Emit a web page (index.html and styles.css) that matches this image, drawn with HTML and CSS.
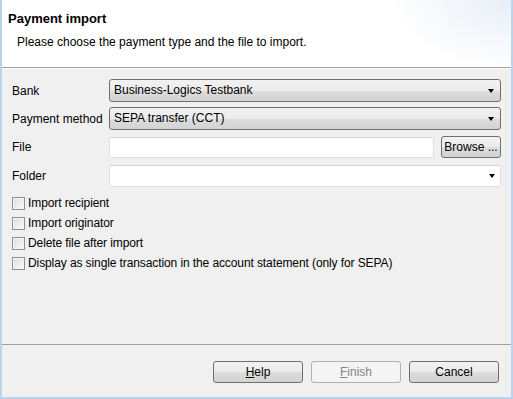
FILE: index.html
```html
<!DOCTYPE html>
<html lang="en">
<head>
  <meta charset="UTF-8">
  <title>Payment import</title>
  <link rel="stylesheet" href="styles.css">
</head>
<body>
  <div class="window">
    <div class="banner">
      <h1>Payment import</h1>
      <p>Please choose the payment type and the file to import.</p>
    </div>

    <div class="content">
      <div class="row">
        <label>Bank</label>
        <div class="combo">Business-Logics Testbank<span class="arrow"></span></div>
      </div>
      <div class="row">
        <label>Payment method</label>
        <div class="combo">SEPA transfer (CCT)<span class="arrow"></span></div>
      </div>
      <div class="row row-file">
        <label>File</label>
        <div class="field"></div>
        <button class="btn btn-browse">Browse ...</button>
      </div>
      <div class="row row-folder">
        <label>Folder</label>
        <div class="field field-combo"><span class="arrow"></span></div>
      </div>

      <div class="checks">
        <div class="check"><span class="box"></span>Import recipient</div>
        <div class="check"><span class="box"></span>Import originator</div>
        <div class="check"><span class="box"></span>Delete file after import</div>
        <div class="check"><span class="box"></span>Display as single transaction in the account statement (only for SEPA)</div>
      </div>
    </div>

    <div class="footer">
      <button class="btn"><u>H</u>elp</button>
      <button class="btn" disabled><u>F</u>inish</button>
      <button class="btn">Cancel</button>
    </div>
  </div>
</body>
</html>
```

FILE: styles.css
```css
body { margin: 0; font-family: "Liberation Sans", Arial, sans-serif; font-size: 12px; color: #000; }

.window {
  width: 513px; height: 399px; box-sizing: border-box;
  border: 2px solid #bcd3ec; border-top: none;
  background: #f0f0f0;
  display: flex; flex-direction: column;
}

.banner {
  height: 68px; box-sizing: border-box; padding: 11px 0 0 6px;
  background: radial-gradient(ellipse 120px 70px at 100% 0, #e8eef8 0%, #f6f8fc 60%, #fff 100%);
  border-bottom: 1px solid #a0a0a0;
  box-shadow: 0 1px 0 #fff;
}
.banner h1 { margin: 0; font-size: 13px; font-weight: bold; line-height: 16px; }
.banner p { margin: 7px 0 0 9px; line-height: 16px; }

.content { flex: 1; padding: 11px 10px 0 10px; }

.row { display: flex; align-items: center; height: 23px; margin-bottom: 5px; }
.row label { width: 97px; flex: none; }
.row-file { height: 22px; margin-top: 6px; margin-bottom: 7px; }
.row-folder { height: 22px; }

.combo {
  flex: 1; height: 23px; box-sizing: border-box; position: relative;
  border: 1px solid #707070; border-radius: 3px;
  background: linear-gradient(#f2f2f2 0%, #ebebeb 50%, #dddddd 51%, #d3d3d3 100%);
  padding-left: 4px; line-height: 21px;
}
.arrow {
  position: absolute; right: 6px; top: 9px;
  border-left: 3.5px solid transparent; border-right: 3.5px solid transparent; border-top: 4px solid #000;
}

.field {
  flex: 1; height: 21px; box-sizing: border-box; position: relative;
  border: 1px solid #dcdfe6; border-top-color: #d0d4da; border-radius: 2px;
  background: #fff;
}
.field-combo { height: 22px; }
.field-combo .arrow { top: 8px; right: 5px; }

.btn {
  font: inherit; color: #000; height: 22px; width: 90px; padding: 0;
  border: 1px solid #707070; border-radius: 3px;
  background: linear-gradient(#f2f2f2 0%, #ebebeb 50%, #dddddd 51%, #d3d3d3 100%);
}
.btn u { text-decoration: underline; }
.btn:disabled { color: #838383; border-color: #adb2b5; background: #f4f4f4; }
.btn-browse { width: 60px; margin-left: 7px; }

.checks { margin-top: 6px; }
.check { display: flex; align-items: center; height: 20px; letter-spacing: -0.1px; }
.box {
  width: 13px; height: 13px; box-sizing: border-box; margin-right: 3px;
  border: 1px solid #8e8f8f;
  background: linear-gradient(135deg, #dcdcdc, #fbfbfb);
  box-shadow: inset 0 0 0 1px #f4f4f4;
}

.footer {
  height: 53px; box-sizing: border-box; border-top: 1px solid #a0a0a0;
  display: flex; justify-content: flex-end; align-items: flex-start; gap: 8px;
  padding: 16px 12px 0 0;
}
```
